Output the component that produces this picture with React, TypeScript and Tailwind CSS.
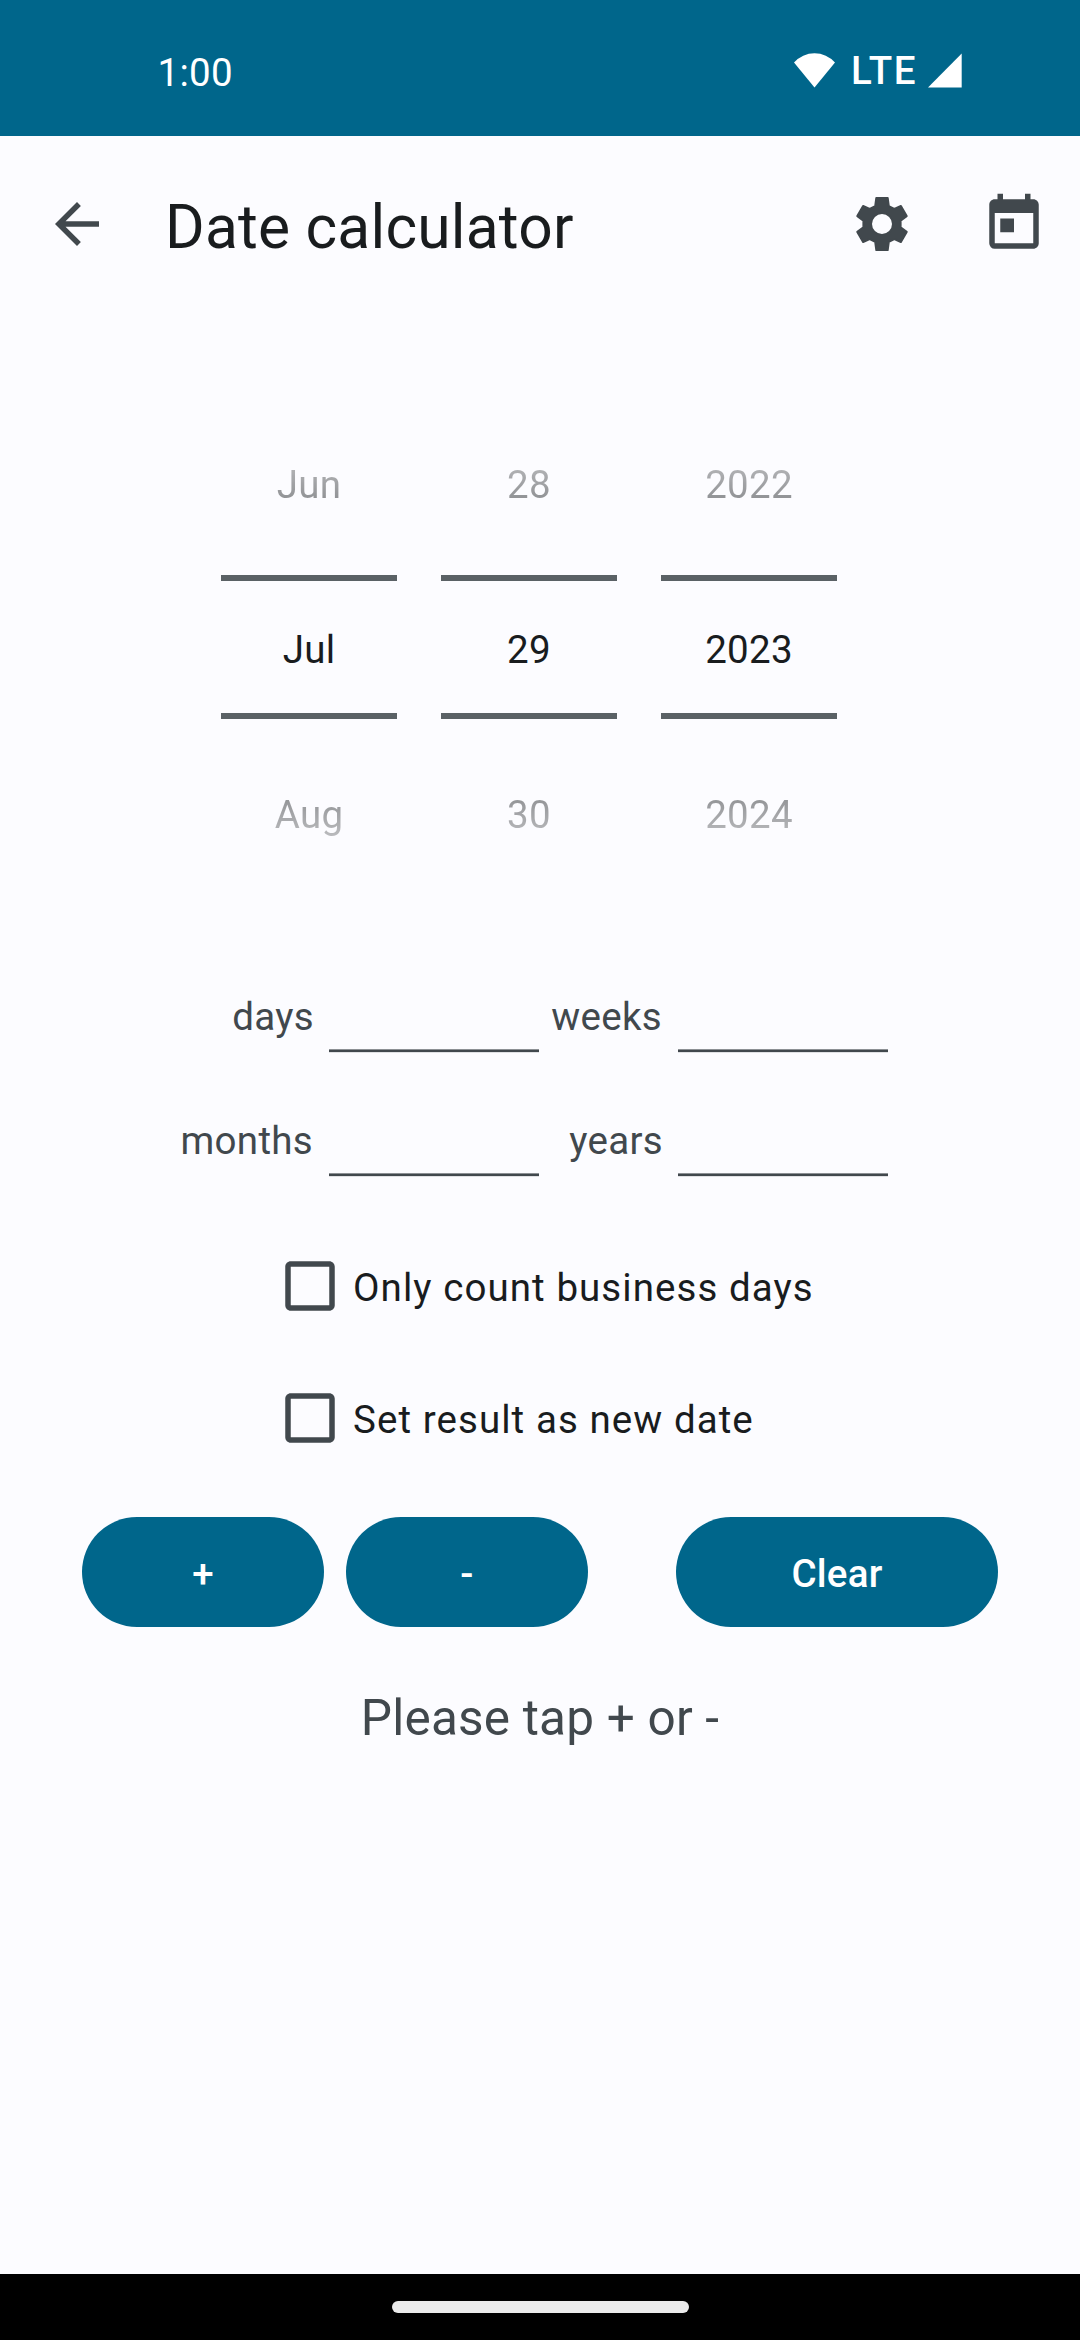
import { MdArrowBack, MdCheckBoxOutlineBlank, MdToday } from "react-icons/md";

function WifiIcon() {
  return (
    <svg className="h-[35px] w-[41px]" viewBox="0 0 41 35" fill="#fff">
      <path d="M0 9.5A27.5 27.5 0 0 1 41 9.5L20.5 34.6Z" />
    </svg>
  );
}

function SignalIcon() {
  return (
    <svg className="ml-[11px] h-[35px] w-[34px]" viewBox="0 0 34 35" fill="#fff">
      <path d="M33.7 0.5V34.5H0Z" />
    </svg>
  );
}

function GearIcon() {
  return (
    <svg className="size-[66px]" viewBox="0 0 66 66" fill="#41484d" stroke="#41484d" strokeWidth="2" strokeLinejoin="round">
      <path
        fillRule="evenodd"
        d="M27.3 7H38.7L39.8 15.2L45.3 17.8L51.9 15L57.7 25.1L51.6 29.6V36.4L57.7 40.9L51.9 51L45.3 48.2L39.8 50.8L38.7 59H27.3L26.2 50.8L20.7 48.2L14.1 51L8.3 40.9L14.4 36.4V29.6L8.3 25.1L14.1 15L20.7 17.8L26.2 15.2ZM33 22A11 11 0 1 0 33 44A11 11 0 1 0 33 22Z"
      />
    </svg>
  );
}

function PickerColumn({ previous, current, next }: { previous: string; current: string; next: string }) {
  return (
    <div className="flex w-44 flex-col text-center text-[38.5px] tracking-[0.3px] text-[#191c1e]">
      <div className="h-[173px] leading-[165px] [mask-image:linear-gradient(to_bottom,rgb(0_0_0/0.03),rgb(0_0_0/0.81))]">
        {previous}
      </div>
      <div className="h-1.5 bg-[#5a6165]" />
      <div className="h-[132px] leading-[137px]">{current}</div>
      <div className="h-1.5 bg-[#5a6165]" />
      <div className="h-44 leading-[191px] [mask-image:linear-gradient(to_bottom,rgb(0_0_0/0.81),rgb(0_0_0/0.03))]">
        {next}
      </div>
    </div>
  );
}

function AmountInput({ label }: { label: string }) {
  return (
    <div>
      <input aria-label={label} className="block h-[55px] w-full bg-transparent px-1 outline-none" />
      <div className="flex flex-col">
        <div className="h-px bg-[#41484d]/60" />
        <div className="h-0.5 bg-[#41484d]" />
        <div className="h-px bg-[#41484d]/15" />
      </div>
    </div>
  );
}

function CheckRow({ label }: { label: string }) {
  return (
    <label className="flex h-[66px] items-start gap-2.5">
      <MdCheckBoxOutlineBlank className="size-[66px] text-[#41484d]" />
      <span className="text-[38.5px] leading-[69px] tracking-[1.07px] text-[#191c1e]">{label}</span>
    </label>
  );
}

export default function App() {
  return (
    <div className="flex h-[2340px] w-[1080px] flex-col overflow-hidden bg-[#fcfcff] font-[Roboto,sans-serif]">
      <div className="flex h-[136px] items-start bg-[#00668b] pl-[157.5px] pr-[118px] text-[38.5px] leading-[45px] text-white">
        <span className="mt-[50px] tracking-[0.3px]">1:00</span>
        <div className="ml-auto mt-[53px] flex items-start">
          <WifiIcon />
          <span className="-mt-[5px] ml-4 w-[66px] font-medium tracking-[1.6px]">LTE</span>
          <SignalIcon />
        </div>
      </div>

      <header className="flex h-44 items-center pl-11 pr-[33px] text-[#41484d]">
        <MdArrowBack className="size-[66px]" />
        <h1 className="mt-[7px] ml-[55px] text-[60.5px] leading-[71px] tracking-[0.2px] text-[#191c1e]">Date calculator</h1>
        <div className="ml-auto flex gap-[66px]">
          <GearIcon />
          <MdToday className="size-[66px]" />
        </div>
      </header>

      <main className="flex flex-1 flex-col">
        <div className="mt-[90px] ml-[221px] flex gap-11">
          <PickerColumn previous="Jun" current="Jul" next="Aug" />
          <PickerColumn previous="28" current="29" next="30" />
          <PickerColumn previous="2022" current="2023" next="2024" />
        </div>

        <div className="mt-[99px] grid grid-cols-[329px_210px_139px_210px] gap-y-[65px] text-right text-[38.5px] leading-[45px] tracking-[0.3px] text-[#41484d]">
          <span className="pr-[15px]">days</span>
          <AmountInput label="days" />
          <span className="pr-4">weeks</span>
          <AmountInput label="weeks" />
          <span className="pr-4">months</span>
          <AmountInput label="months" />
          <span className="pr-[15px]">years</span>
          <AmountInput label="years" />
        </div>

        <div className="mt-[76px] ml-[277px] flex flex-col gap-[66px]">
          <CheckRow label="Only count business days" />
          <CheckRow label="Set result as new date" />
        </div>

        <div className="mt-[66px] ml-[82px] flex text-[38.5px] leading-[113px] font-medium tracking-[0.25px] text-white">
          <button className="h-[110px] w-[242px] rounded-full bg-[#00668b]">+</button>
          <button className="ml-[22px] h-[110px] w-[242px] rounded-full bg-[#00668b]">-</button>
          <button className="ml-[88px] h-[110px] w-[322px] rounded-full bg-[#00668b]">Clear</button>
        </div>

        <p className="mt-[62px] text-center text-[49.5px] leading-[58px] tracking-[0.2px] text-[#41484d]">Please tap + or -</p>
      </main>

      <div className="flex h-[66px] justify-center bg-black">
        <div className="mt-[27px] h-3 w-[297px] rounded-full bg-[#ebebeb]" />
      </div>
    </div>
  );
}
